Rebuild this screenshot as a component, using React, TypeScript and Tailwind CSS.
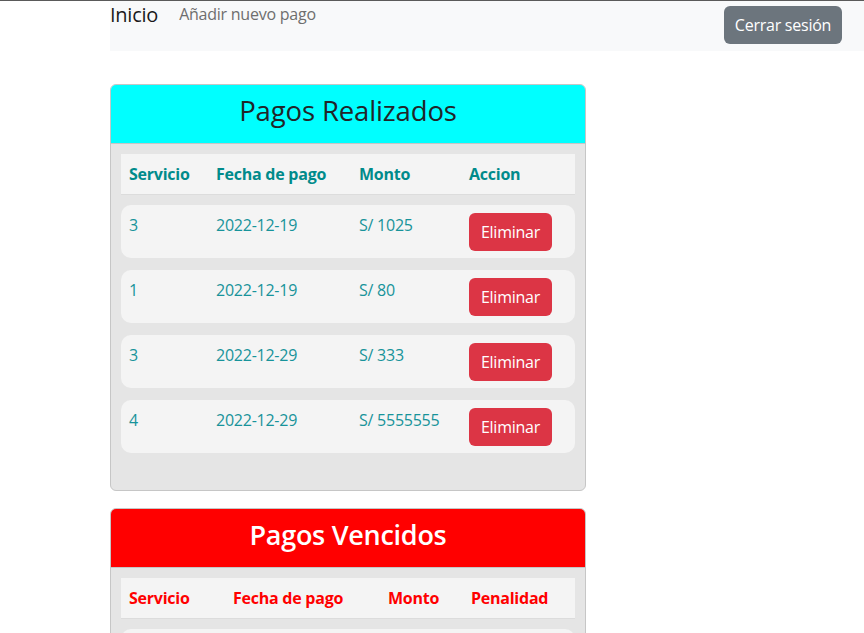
import React from "react";

const font = { fontFamily: '"Open Sans", "Noto Sans", sans-serif' };

type Pago = { s: string; f: string; m: string };
const pagos: Pago[] = [
  { s: "3", f: "2022-12-19", m: "S/ 1025" },
  { s: "1", f: "2022-12-19", m: "S/ 80" },
  { s: "3", f: "2022-12-29", m: "S/ 333" },
  { s: "4", f: "2022-12-29", m: "S/ 5555555" },
];

export default function App() {
  return (
    <div className="min-h-[633px] bg-white border-t border-[#5a5a5a] text-[16px] tracking-[-0.015em] text-[#212529]" style={font}>
      <nav className="ml-[110px] h-[50px] bg-[#f8f9fa] flex items-start">
        <a className="text-[20px] leading-[28px] text-[#1a1a1a] mr-[21px]">Inicio</a>
        <a className="text-[16px] leading-[26px] text-[#6e6e6e]">Añadir nuevo pago</a>
        <div className="flex-1" />
        <button className="mt-[5px] mr-[22px] h-[38px] w-[118px] rounded-[6px] bg-[#6c757d] text-white text-[16px]">
          Cerrar sesión
        </button>
      </nav>

      <div className="ml-[110px] mt-[33px] w-[476px] flex flex-col gap-[17px]">
        <section className="rounded-[6px] border border-[#c6c6c6] bg-[#e5e5e5] overflow-hidden">
          <div className="h-[59px] pb-[6px] bg-[#00ffff] border-b border-[#c6c6c6] flex items-center justify-center">
            <h2 className="text-[27.5px] font-medium text-[#212529] tracking-[-0.005em]">Pagos Realizados</h2>
          </div>
          <div className="px-[10px] pt-[10px] pb-[37px]">
            <div className="h-[41px] bg-[#f4f4f4] border-b border-[#dcdcdc] flex items-center font-bold text-[#008b8b]">
              <div className="w-[87px] px-2">Servicio</div>
              <div className="w-[143px] px-2">Fecha de pago</div>
              <div className="w-[110px] px-2">Monto</div>
              <div className="flex-1 px-2">Accion</div>
            </div>
            <div className="mt-[10px] flex flex-col gap-[12px]">
              {pagos.map((p, i) => (
                <div key={i} className="h-[53px] bg-[#f4f4f4] rounded-[10px] flex items-start text-[#17939a]">
                  <div className="w-[87px] px-2 pt-[8px] leading-[24px]">{p.s}</div>
                  <div className="w-[143px] px-2 pt-[8px] leading-[24px]">{p.f}</div>
                  <div className="w-[110px] px-2 pt-[8px] leading-[24px]">{p.m}</div>
                  <div className="flex-1 px-2 pt-[8px]">
                    <button className="h-[38px] w-[83px] rounded-[6px] bg-[#dc3545] text-white text-[16px]">Eliminar</button>
                  </div>
                </div>
              ))}
            </div>
          </div>
        </section>

        <section className="rounded-[6px] border border-[#c6c6c6] bg-[#e5e5e5] overflow-hidden">
          <div className="h-[59px] pb-[6px] bg-[#ff0000] border-b border-[#c6c6c6] flex items-center justify-center">
            <h2 className="text-[27px] font-semibold text-white tracking-[-0.01em]">Pagos Vencidos</h2>
          </div>
          <div className="px-[10px] pt-[10px] pb-[37px]">
            <div className="h-[41px] bg-[#f4f4f4] border-b border-[#dcdcdc] flex items-center font-bold text-[#ff0000]">
              <div className="w-[104px] px-2">Servicio</div>
              <div className="w-[155px] px-2">Fecha de pago</div>
              <div className="w-[83px] px-2">Monto</div>
              <div className="flex-1 px-2">Penalidad</div>
            </div>
            <div className="mt-[10px] flex flex-col gap-[12px]">
              <div className="h-[53px] bg-[#f4f4f4] rounded-[10px]" />
            </div>
          </div>
        </section>
      </div>
    </div>
  );
}
